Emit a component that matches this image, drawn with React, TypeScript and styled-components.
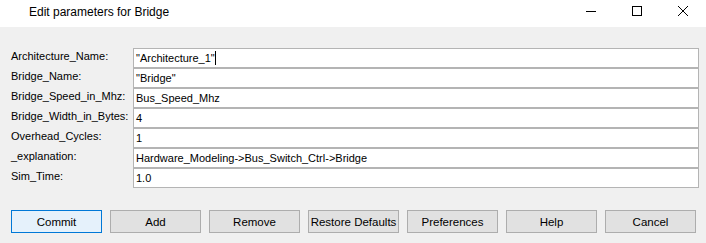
import styled, { createGlobalStyle } from "styled-components";

const GlobalStyle = createGlobalStyle`
  html, body {
    margin: 0;
    padding: 0;
    background: #f0f0f0;
  }
  body {
    width: 706px;
    height: 243px;
    overflow: hidden;
    font-family: "Liberation Sans", Arial, sans-serif;
  }
`;

const Window = styled.div`
  display: flex;
  flex-direction: column;
  width: 706px;
  height: 243px;
  background-color: #f0f0f0;
`;

const TitleBar = styled.div`
  display: flex;
  align-items: center;
  height: 27px;
  background-color: #fff;
  padding-left: 29px;
`;

const Title = styled.span`
  flex: 1;
  font-size: 12px;
  color: #000;
  margin-top: -3px;
`;

const Controls = styled.div`
  display: flex;
  height: 100%;
`;

const ControlButton = styled.div`
  width: 46px;
  height: 100%;
  display: flex;
  align-items: center;
  justify-content: center;
  margin-top: -3px;
`;

const Body = styled.div`
  display: flex;
  flex-direction: column;
  padding: 21px 7px 0 11px;
`;

const Form = styled.div`
  display: grid;
  grid-template-columns: 122px 1fr;
`;

const Label = styled.div`
  height: 20px;
  font-size: 11px;
  color: #000;
  line-height: 17px;
  white-space: nowrap;
`;

const Field = styled.div`
  box-sizing: border-box;
  height: 20px;
  border: 1px solid #b4b4b4;
  background-color: #fff;
  font-size: 11px;
  line-height: 18px;
  padding-left: 2px;
  color: #000;
  white-space: nowrap;
`;

const Caret = styled.span`
  display: inline-block;
  width: 1px;
  height: 14px;
  background: #000;
  vertical-align: -3px;
`;

const ButtonRow = styled.div`
  display: flex;
  gap: 8px;
  margin-top: 22px;
`;

const Button = styled.div<{ $primary?: boolean }>`
  box-sizing: border-box;
  width: 91px;
  height: 23px;
  display: flex;
  align-items: center;
  justify-content: center;
  font-size: 11.5px;
  white-space: nowrap;
  color: #000;
  background-color: ${(p) => (p.$primary ? "#e5f1fb" : "#e1e1e1")};
  border: 1px solid ${(p) => (p.$primary ? "#0078d7" : "#adadad")};
`;

const params = [
  { name: "Architecture_Name:", value: '"Architecture_1"', caret: true },
  { name: "Bridge_Name:", value: '"Bridge"' },
  { name: "Bridge_Speed_in_Mhz:", value: "Bus_Speed_Mhz" },
  { name: "Bridge_Width_in_Bytes:", value: "4" },
  { name: "Overhead_Cycles:", value: "1" },
  { name: "_explanation:", value: "Hardware_Modeling->Bus_Switch_Ctrl->Bridge" },
  { name: "Sim_Time:", value: "1.0" },
];

const buttons = ["Commit", "Add", "Remove", "Restore Defaults", "Preferences", "Help", "Cancel"];

export default function App() {
  return (
    <>
      <GlobalStyle />
      <Window>
        <TitleBar>
          <Title>Edit parameters for Bridge</Title>
          <Controls>
            <ControlButton>
              <svg width="10" height="10" viewBox="0 0 10 10">
                <path d="M0 5.5h10" stroke="#000" strokeWidth="1" />
              </svg>
            </ControlButton>
            <ControlButton>
              <svg width="10" height="10" viewBox="0 0 10 10">
                <rect x="0.5" y="0.5" width="9" height="9" fill="none" stroke="#000" strokeWidth="1" />
              </svg>
            </ControlButton>
            <ControlButton>
              <svg width="10" height="10" viewBox="0 0 10 10">
                <path d="M0 0L10 10M10 0L0 10" stroke="#000" strokeWidth="1" />
              </svg>
            </ControlButton>
          </Controls>
        </TitleBar>
        <Body>
          <Form>
            {params.map((p) => (
              <>
                <Label key={p.name}>{p.name}</Label>
                <Field key={p.name + "-v"}>
                  {p.value}
                  {p.caret && <Caret />}
                </Field>
              </>
            ))}
          </Form>
          <ButtonRow>
            {buttons.map((b) => (
              <Button key={b} $primary={b === "Commit"}>
                {b}
              </Button>
            ))}
          </ButtonRow>
        </Body>
      </Window>
    </>
  );
}
